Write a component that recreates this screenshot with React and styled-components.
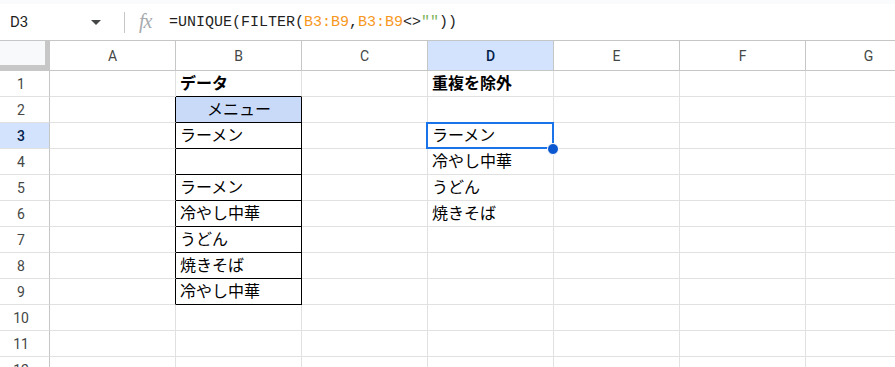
import React from 'react'
import styled, { createGlobalStyle, css } from 'styled-components'

const GlobalStyle = createGlobalStyle`
  body {
    margin: 0;
    background: #ffffff;
    font-family: Roboto, "Liberation Sans", "Noto Sans CJK JP", sans-serif;
  }
`

const Page = styled.div`
  width: 895px;
  height: 367px;
  overflow: hidden;
  background: #ffffff;
`

const TopStrip = styled.div`
  height: 4px;
  background: #f9fbfd;
`

const FormulaBar = styled.div`
  height: 36px;
  display: flex;
  align-items: center;
`

const NameBox = styled.div`
  width: 114px;
  padding-left: 10px;
  box-sizing: border-box;
  display: flex;
  align-items: center;
  justify-content: space-between;
  padding-right: 13px;
  font-size: 15px;
  color: #1f1f1f;
`

const Divider = styled.div`
  width: 1px;
  height: 21px;
  margin: 0 14px 0 10px;
  background: #c4c7c5;
`

const Fx = styled.span`
  font-family: "Liberation Serif", serif;
  font-style: italic;
  font-size: 20px;
  color: #a7aaad;
  letter-spacing: -1px;
  width: 30px;
  margin-top: -2px;
`

const Formula = styled.div`
  font-family: "Liberation Mono", "DejaVu Sans Mono", monospace;
  font-size: 15px;
  color: #1f1f1f;
  white-space: pre;
`

const Ref = styled.span`
  color: #f7981d;
`

const Str = styled.span`
  color: #7cb35a;
`

const Grid = styled.div`
  display: grid;
  grid-template-columns: 50px repeat(7, 126px);
  grid-template-rows: 31px;
  grid-auto-rows: 26px;
  width: 895px;
`

const Corner = styled.div`
  box-sizing: border-box;
  border-top: 1px solid #c4c7c5;
  background: #f8f9fa;
  border-right: 5px solid #c7c7c7;
  border-bottom: 6px solid #c7c7c7;
`

const ColHeader = styled.div`
  box-sizing: border-box;
  border-top: 1px solid #c4c7c5;
  border-bottom: 1px solid #c4c7c5;
  border-right: 1px solid #c4c7c5;
  display: flex;
  align-items: center;
  justify-content: center;
  font-size: 14px;
  color: ${p => (p.$active ? '#041e49' : '#444746')};
  background: ${p => (p.$active ? '#d3e3fd' : '#ffffff')};
  font-weight: ${p => (p.$active ? 500 : 400)};
`

const RowHeader = styled.div`
  box-sizing: border-box;
  border-right: 1px solid #c4c7c5;
  border-bottom: 1px solid #e1e1e1;
  display: flex;
  align-items: center;
  justify-content: center;
  padding-right: 7px;
  font-size: 14px;
  color: ${p => (p.$active ? '#041e49' : '#444746')};
  background: ${p => (p.$active ? '#d3e3fd' : '#ffffff')};
  font-weight: ${p => (p.$active ? 500 : 400)};
`

const Cell = styled.div`
  position: relative;
  box-sizing: border-box;
  border-right: 1px solid ${p => p.$rb};
  border-bottom: 1px solid ${p => p.$bb};
  background: ${p => p.$bg || '#ffffff'};
  display: flex;
  align-items: center;
  justify-content: ${p => (p.$center ? 'center' : 'flex-start')};
  padding: 0 3px 3px 4px;
  font-family: "Liberation Sans", "Noto Sans CJK JP", sans-serif;
  font-size: 16px;
  font-weight: ${p => (p.$bold ? 700 : 400)};
  color: #000000;
  white-space: nowrap;
  overflow: visible;

  ${p => p.$selected && css`
    &::after {
      content: '';
      position: absolute;
      top: -1px;
      left: -2px;
      right: -1px;
      bottom: -1px;
      border: 2px solid #1a73e8;
      pointer-events: none;
    }
  `}
`

const Handle = styled.span`
  position: absolute;
  right: -6px;
  bottom: -7px;
  width: 10px;
  height: 10px;
  border-radius: 50%;
  background: #0b57d0;
  border: 1px solid #ffffff;
  z-index: 2;
`

const COLS = ['A', 'B', 'C', 'D', 'E', 'F', 'G']
const GRID_LINE = '#e1e1e1'

const data = {
  B1: { text: 'データ', bold: true },
  B2: { text: 'メニュー', center: true, bg: '#c9daf8' },
  B3: { text: 'ラーメン' },
  B5: { text: 'ラーメン' },
  B6: { text: '冷やし中華' },
  B7: { text: 'うどん' },
  B8: { text: '焼きそば' },
  B9: { text: '冷やし中華' },
  D1: { text: '重複を除外', bold: true },
  D3: { text: 'ラーメン' },
  D4: { text: '冷やし中華' },
  D5: { text: 'うどん' },
  D6: { text: '焼きそば' },
}

// B2:B9 carries a black outline on every cell
const inBox = (col, row) => col === 'B' && row >= 2 && row <= 9

const borders = (col, row) => {
  const next = COLS[COLS.indexOf(col) + 1]
  const right = inBox(col, row) || inBox(next, row) ? '#000000' : GRID_LINE
  const bottom = inBox(col, row) || inBox(col, row + 1) ? '#000000' : GRID_LINE
  return { right, bottom }
}

const Caret = () => (
  <svg width="10" height="5" viewBox="0 0 10 5">
    <path d="M0 0h10L5 5z" fill="#444746" />
  </svg>
)

const App = () => {
  const rows = Array.from({ length: 12 }, (_, i) => i + 1)

  return (
    <Page>
      <GlobalStyle />
      <TopStrip />
      <FormulaBar>
        <NameBox>
          <span>D3</span>
          <Caret />
        </NameBox>
        <Divider />
        <Fx>fx</Fx>
        <Formula>
          =UNIQUE(FILTER(<Ref>B3:B9</Ref>,<Ref>B3:B9</Ref>{'<>'}<Str>""</Str>))
        </Formula>
      </FormulaBar>
      <Grid>
        <Corner />
        {COLS.map(c => (
          <ColHeader key={c} $active={c === 'D'}>{c}</ColHeader>
        ))}
        {rows.map(r => (
          <React.Fragment key={r}>
            <RowHeader $active={r === 3}>{r}</RowHeader>
            {COLS.map(c => {
              const id = c + r
              const cell = data[id] || {}
              const { right, bottom } = borders(c, r)
              const selected = id === 'D3'
              return (
                <Cell
                  key={id}
                  $rb={right}
                  $bb={bottom}
                  $bg={cell.bg}
                  $bold={cell.bold}
                  $center={cell.center}
                  $selected={selected}
                >
                  {cell.text}
                  {selected && <Handle />}
                </Cell>
              )
            })}
          </React.Fragment>
        ))}
      </Grid>
    </Page>
  )
}

export default App
